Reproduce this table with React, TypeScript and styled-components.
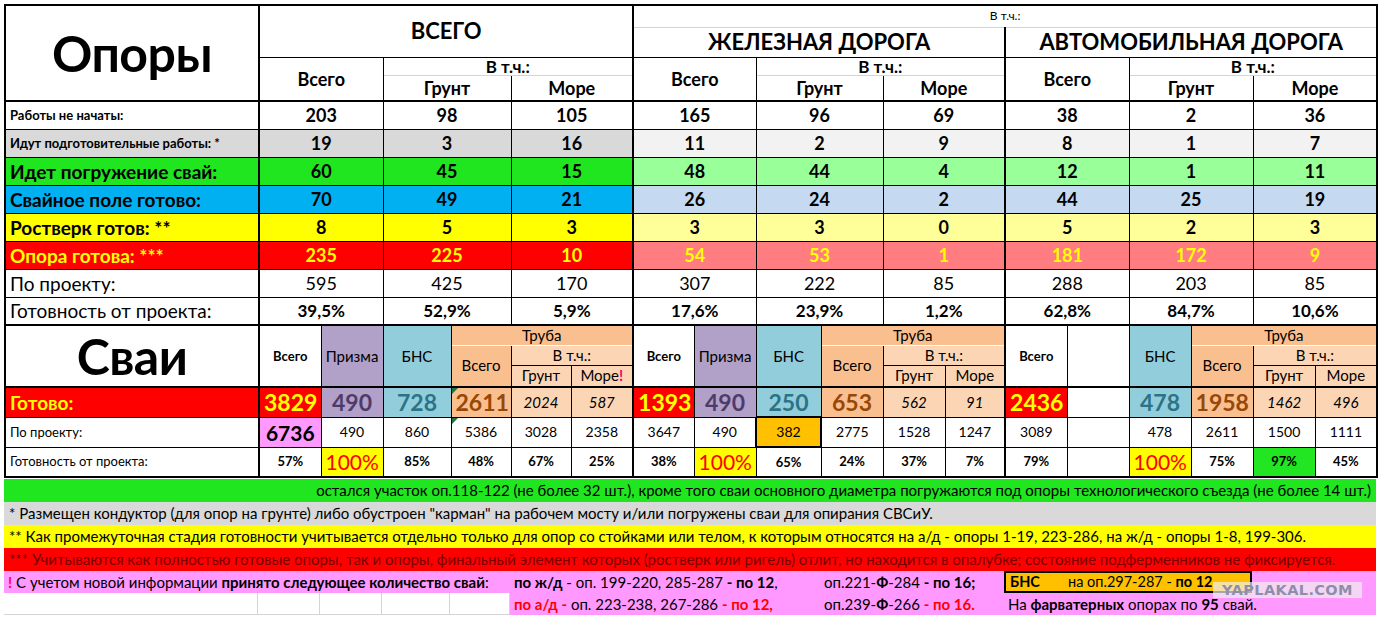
import React from "react";
import styled, { createGlobalStyle } from "styled-components";

const GlobalStyle = createGlobalStyle`
  html, body {
    margin: 0;
    padding: 0;
    background: #fff;
  }
  body {
    font-family: Lato, "Open Sans", "DejaVu Sans", sans-serif;
    color: #000;
  }
`;

const COLS = [254, 62, 62, 68, 60, 60, 62, 61, 62, 65, 62, 62, 60, 62, 62, 62, 62, 62, 62];

const C = {
  grey: "#d9d9d9",
  greyL: "#f2f2f2",
  green: "#1fe61f",
  greenL: "#99ff99",
  blue: "#00b0f0",
  blueL: "#c5d9f1",
  yellow: "#ffff00",
  yellowL: "#ffff99",
  red: "#ff0000",
  redL: "#ff7c80",
  purple: "#b1a0c7",
  bns: "#92cddc",
  pipe: "#fabf8f",
  pipeL: "#fcd5b4",
  pink: "#ff99ff",
  amber: "#ffc000",
  faint: "#d4d4d4",
};

const Page = styled.div`
  padding: 4px 0 0 4px;
  width: 1378px;
  position: relative;
`;

const Sheet = styled.table`
  border-collapse: collapse;
  table-layout: fixed;
  width: 1372px;
  border: 2px solid #000;
`;

const Row = styled.tr<{ $h: number; $thickTop?: boolean; $thickBottom?: boolean }>`
  height: ${(p) => p.$h}px;
  & > td {
    ${(p) => (p.$thickTop ? "border-top: 2px solid #000;" : "")}
    ${(p) => (p.$thickBottom ? "border-bottom: 2px solid #000;" : "")}
  }
`;

type CellProps = {
  $bg?: string;
  $fg?: string;
  $size?: number;
  $bold?: boolean;
  $italic?: boolean;
  $align?: "left" | "center" | "right";
  $lead?: boolean;
  $box?: boolean;
  $flag?: boolean;
  $bb?: string;
};

const Cell = styled.td<CellProps>`
  position: relative;
  padding: 0 4px;
  border: 1px solid #000;
  background: ${(p) => p.$bg ?? "#fff"};
  color: ${(p) => p.$fg ?? "#000"};
  font-size: ${(p) => p.$size ?? 14}px;
  font-weight: ${(p) => (p.$bold ? 700 : 400)};
  font-style: ${(p) => (p.$italic ? "italic" : "normal")};
  text-align: ${(p) => p.$align ?? "center"};
  line-height: 1;
  white-space: nowrap;
  overflow: hidden;
  ${(p) => (p.$lead ? "border-left: 2px solid #000;" : "")}
  ${(p) => (p.$box ? "border: 2px solid #000;" : "")}
  ${(p) => (p.$bb ? `border-bottom: 1px solid ${p.$bb};` : "")}
  ${(p) =>
    p.$flag
      ? `&::before {
          content: "";
          position: absolute;
          left: 0;
          top: 0;
          border-top: 6px solid #217346;
          border-right: 6px solid transparent;
        }`
      : ""}
`;

const Title = styled.span`
  font-size: 50px;
  font-weight: 700;
  letter-spacing: -0.5px;
`;

const Bang = styled.span`
  color: #ff0066;
  font-weight: 700;
`;

type Spec = {
  v?: React.ReactNode;
  span?: number;
  rows?: number;
  bg?: string;
  fg?: string;
  size?: number;
  bold?: boolean;
  italic?: boolean;
  box?: boolean;
  flag?: boolean;
  lead?: boolean;
  bb?: string;
};

const render = (list: Spec[]) =>
  list.map((s, i) => (
    <Cell
      key={i}
      colSpan={s.span}
      rowSpan={s.rows}
      $bg={s.bg}
      $fg={s.fg}
      $size={s.size}
      $bold={s.bold}
      $italic={s.italic}
      $box={s.box}
      $flag={s.flag}
      $lead={s.lead}
      $bb={s.bb}
    >
      {s.v}
    </Cell>
  ));

type TopRow = {
  label: string;
  labelSize: number;
  labelBold: boolean;
  vals: (number | string)[];
  bgL?: string;
  bgR?: string;
  fg?: string;
  size: number;
  bold: boolean;
};

const topRows: TopRow[] = [
  { label: "Работы не начаты:", labelSize: 13, labelBold: true, vals: [203, 98, 105, 165, 96, 69, 38, 2, 36], size: 18, bold: true },
  { label: "Идут подготовительные работы: *", labelSize: 13, labelBold: true, vals: [19, 3, 16, 11, 2, 9, 8, 1, 7], bgL: C.grey, bgR: C.greyL, size: 18, bold: true },
  { label: "Идет погружение свай:", labelSize: 19, labelBold: true, vals: [60, 45, 15, 48, 44, 4, 12, 1, 11], bgL: C.green, bgR: C.greenL, size: 18, bold: true },
  { label: "Свайное поле готово:", labelSize: 19, labelBold: true, vals: [70, 49, 21, 26, 24, 2, 44, 25, 19], bgL: C.blue, bgR: C.blueL, size: 18, bold: true },
  { label: "Ростверк готов: **", labelSize: 19, labelBold: true, vals: [8, 5, 3, 3, 3, 0, 5, 2, 3], bgL: C.yellow, bgR: C.yellowL, size: 18, bold: true },
  { label: "Опора готова: ***", labelSize: 19, labelBold: true, vals: [235, 225, 10, 54, 53, 1, 181, 172, 9], bgL: C.red, bgR: C.redL, fg: "#ffff00", size: 18, bold: true },
  { label: "По проекту:", labelSize: 19, labelBold: false, vals: [595, 425, 170, 307, 222, 85, 288, 203, 85], size: 18, bold: false },
  { label: "Готовность от проекта:", labelSize: 19, labelBold: false, vals: ["39,5%", "52,9%", "5,9%", "17,6%", "23,9%", "1,2%", "62,8%", "84,7%", "10,6%"], size: 17, bold: true },
];

const big = (v: string, bg: string, fg: string): Spec => ({ v, bg, fg, size: 23, bold: true });
const small = (v: string, bg = C.pipeL): Spec => ({ v, bg, size: 15, italic: true });
const plain = (v: string, bg?: string): Spec => ({ v, bg, size: 14 });
const pct = (v: string, bg?: string): Spec => ({ v, bg, size: 13, bold: true });
const full = (): Spec => ({ v: "100%", bg: C.yellow, fg: C.red, size: 21 });

const readyRow: Spec[][] = [
  [big("3829", C.red, "#ffff00"), big("490", C.purple, "#4f3b6b"), big("728", C.bns, "#2a7487"), { ...big("2611", C.pipe, "#974706"), flag: true }, small("2024"), small("587")],
  [big("1393", C.red, "#ffff00"), big("490", C.purple, "#4f3b6b"), big("250", C.bns, "#2a7487"), big("653", C.pipe, "#974706"), small("562"), small("91")],
  [big("2436", C.red, "#ffff00"), plain(""), big("478", C.bns, "#2a7487"), big("1958", C.pipe, "#974706"), small("1462"), small("496")],
];

const planRow: Spec[][] = [
  [{ v: "6736", bg: C.pink, size: 21, bold: true }, plain("490"), plain("860"), { ...plain("5386"), flag: true }, plain("3028"), plain("2358")],
  [plain("3647"), plain("490"), { ...plain("382", C.amber), box: true }, plain("2775"), plain("1528"), plain("1247")],
  [plain("3089"), plain(""), plain("478"), plain("2611"), plain("1500"), plain("1111")],
];

const doneRow: Spec[][] = [
  [pct("57%"), full(), pct("85%"), pct("48%"), pct("67%"), pct("25%")],
  [pct("38%"), full(), pct("65%"), pct("24%"), pct("37%"), pct("7%")],
  [pct("79%"), pct(""), full(), pct("75%"), pct("97%", "#22e622"), pct("45%")],
];

const groupRow = (groups: Spec[][]) =>
  render(groups.flatMap((g) => g.map((s, i) => (i === 0 ? { ...s, lead: true } : s))));

const Notes = styled.div`
  width: 1372px;
  margin-top: 1px;
  font-size: 15px;
`;

const Note = styled.div<{ $bg: string; $fg?: string; $right?: boolean }>`
  height: 23px;
  line-height: 23px;
  padding: 0 5px;
  background: ${(p) => p.$bg};
  color: ${(p) => p.$fg ?? "#000"};
  text-align: ${(p) => (p.$right ? "right" : "left")};
  white-space: nowrap;
  overflow: hidden;
`;

const Split = styled.div`
  display: grid;
  grid-template-columns: 506px 310px 184px 248px 124px;
  height: 22px;
  line-height: 22px;
  white-space: nowrap;
`;

const Part = styled.div<{ $bg?: string; $span?: number }>`
  background: ${(p) => p.$bg ?? C.pink};
  padding: 0 4px;
  overflow: visible;
  ${(p) => (p.$span ? `grid-column: span ${p.$span};` : "")}
`;

const Blank = styled.div`
  background: #fff;
  border-right: 1px solid ${C.faint};
  border-bottom: 1px solid ${C.faint};
  background-image: linear-gradient(
    to right,
    transparent 253px,
    ${C.faint} 253px,
    ${C.faint} 254px,
    transparent 254px,
    transparent 315px,
    ${C.faint} 315px,
    ${C.faint} 316px,
    transparent 316px,
    transparent 377px,
    ${C.faint} 377px,
    ${C.faint} 378px,
    transparent 378px,
    transparent 445px,
    ${C.faint} 445px,
    ${C.faint} 446px,
    transparent 446px
  );
`;

const BoxNote = styled.div`
  display: grid;
  grid-template-columns: 58px auto;
  background: ${C.amber};
  border: 2px solid #000;
  padding: 0 4px;
  line-height: 18px;
  font-size: 14.5px;
`;

const Red = styled.b`
  color: #ff0000;
`;

const Watermark = styled.div`
  position: absolute;
  left: 1213px;
  top: 582px;
  width: 149px;
  height: 16px;
  background: rgba(240, 240, 240, 0.7);
  color: #8e8eab;
  font-family: "DejaVu Sans", sans-serif;
  font-weight: 700;
  font-size: 14.5px;
  line-height: 16px;
  text-align: center;
  letter-spacing: 0.4px;
`;

export default function App() {
  const headGroups = [0, 1, 2];
  return (
    <Page>
      <GlobalStyle />
      <Sheet>
        <colgroup>
          {COLS.map((w, i) => (
            <col key={i} style={{ width: w }} />
          ))}
        </colgroup>
        <tbody>
          <Row $h={22}>
            <Cell rowSpan={4} $bb="#000" style={{ borderBottomWidth: 2 }}>
              <Title>Опоры</Title>
            </Cell>
            <Cell colSpan={6} rowSpan={2} $lead $size={22} $bold>
              ВСЕГО
            </Cell>
            <Cell colSpan={12} $lead $size={12} $bb={C.faint} style={{ borderTop: "2px solid #000" }}>
              В т.ч.:
            </Cell>
          </Row>
          <Row $h={30}>
            <Cell colSpan={6} $lead $size={22} $bold>
              ЖЕЛЕЗНАЯ ДОРОГА
            </Cell>
            <Cell colSpan={6} $lead $size={22} $bold>
              АВТОМОБИЛЬНАЯ ДОРОГА
            </Cell>
          </Row>
          <Row $h={18}>
            {headGroups.map((g) => (
              <React.Fragment key={g}>
                <Cell colSpan={2} rowSpan={2} $lead $size={18} $bold style={{ borderBottomWidth: 2 }}>
                  Всего
                </Cell>
                <Cell colSpan={4} $size={17} $bold $bb={C.faint}>
                  В т.ч.:
                </Cell>
              </React.Fragment>
            ))}
          </Row>
          <Row $h={26} $thickBottom>
            {headGroups.map((g) => (
              <React.Fragment key={g}>
                <Cell colSpan={2} $size={18} $bold>
                  Грунт
                </Cell>
                <Cell colSpan={2} $size={18} $bold>
                  Море
                </Cell>
              </React.Fragment>
            ))}
          </Row>

          {topRows.map((r) => (
            <Row key={r.label} $h={28}>
              <Cell $align="left" $bg={r.bgL} $fg={r.fg} $size={r.labelSize} $bold={r.labelBold}>
                {r.label}
              </Cell>
              {r.vals.map((v, i) => (
                <Cell
                  key={i}
                  colSpan={2}
                  $lead={i % 3 === 0}
                  $bg={i < 3 ? r.bgL : r.bgR}
                  $fg={r.fg}
                  $size={r.size}
                  $bold={r.bold}
                >
                  {v}
                </Cell>
              ))}
            </Row>
          ))}

          <Row $h={20} $thickTop>
            <Cell rowSpan={3} style={{ borderBottomWidth: 2 }}>
              <Title>Сваи</Title>
            </Cell>
            {headGroups.map((g) => (
              <React.Fragment key={g}>
                <Cell rowSpan={3} $lead $size={13} $bold>
                  Всего
                </Cell>
                {g === 2 ? (
                  <Cell rowSpan={3} style={{ borderLeftColor: "#bbb" }} />
                ) : (
                  <Cell rowSpan={3} $bg={C.purple} $size={15}>
                    Призма
                  </Cell>
                )}
                <Cell rowSpan={3} $bg={C.bns} $size={15}>
                  БНС
                </Cell>
                <Cell colSpan={3} $bg={C.pipe} $size={15} $bb="#fff">
                  Труба
                </Cell>
              </React.Fragment>
            ))}
          </Row>
          <Row $h={20}>
            {headGroups.map((g) => (
              <React.Fragment key={g}>
                <Cell rowSpan={2} $bg={C.pipe} $size={15}>
                  Всего
                </Cell>
                <Cell colSpan={2} $bg={C.pipeL} $size={15}>
                  В т.ч.:
                </Cell>
              </React.Fragment>
            ))}
          </Row>
          <Row $h={22}>
            {headGroups.map((g) => (
              <React.Fragment key={g}>
                <Cell $bg={C.pipeL} $size={15}>
                  Грунт
                </Cell>
                <Cell $bg={C.pipeL} $size={15}>
                  Море{g === 0 && <Bang>!</Bang>}
                </Cell>
              </React.Fragment>
            ))}
          </Row>

          <Row $h={30} $thickTop>
            <Cell $align="left" $bg={C.red} $fg="#ffff00" $size={19} $bold>
              Готово:
            </Cell>
            {groupRow(readyRow)}
          </Row>
          <Row $h={30}>
            <Cell $align="left" $size={13}>
              По проекту:
            </Cell>
            {groupRow(planRow)}
          </Row>
          <Row $h={30}>
            <Cell $align="left" $size={13}>
              Готовность от проекта:
            </Cell>
            {groupRow(doneRow)}
          </Row>
        </tbody>
      </Sheet>

      <Notes>
        <Note $bg={C.green} $right>
          остался участок оп.118-122 (не более 32 шт.), кроме того сваи основного диаметра погружаются под опоры
          технологического съезда (не более 14 шт.)
        </Note>
        <Note $bg={C.grey}>
          * Размещен кондуктор (для опор на грунте) либо обустроен "карман" на рабочем мосту и/или погружены сваи для
          опирания СВСиУ.
        </Note>
        <Note $bg={C.yellow}>
          ** Как промежуточная стадия готовности учитывается отдельно только для опор со стойками или телом, к которым
          относятся на а/д - опоры 1-19, 223-286, на ж/д - опоры 1-8, 199-306.
        </Note>
        <Note $bg={C.red} $fg="#780000">
          *** Учитываются как полностью готовые опоры, так и опоры, финальный элемент которых (ростверк или ригель)
          отлит, но находится в опалубке; состояние подферменников не фиксируется.
        </Note>
        <Split>
          <Part>
            <Bang>!</Bang> С учетом новой информации <b>принято следующее количество свай</b>:
          </Part>
          <Part>
            <b>по ж/д</b> - оп. 199-220, 285-287 <b>- по 12</b>,
          </Part>
          <Part>
            оп.221-<b>Ф</b>-284 <b>- по 16;</b>
          </Part>
          <Part style={{ padding: 0 }}>
            <BoxNote>
              <b>БНС</b>
              <span>
                на оп.297-287 - <b>по 12</b>
              </span>
            </BoxNote>
          </Part>
          <Part />
        </Split>
        <Split>
          <Blank />
          <Part>
            <Red>по а/д -</Red> оп. 223-238, 267-286 <Red>- по 12,</Red>
          </Part>
          <Part>
            оп.239-<b>Ф</b>-266 <Red>- по 16.</Red>
          </Part>
          <Part $span={2}>
            На <b>фарватерных</b> опорах по <b>95</b> свай.
          </Part>
        </Split>
      </Notes>
      <Watermark>YAPLAKAL.COM</Watermark>
    </Page>
  );
}
